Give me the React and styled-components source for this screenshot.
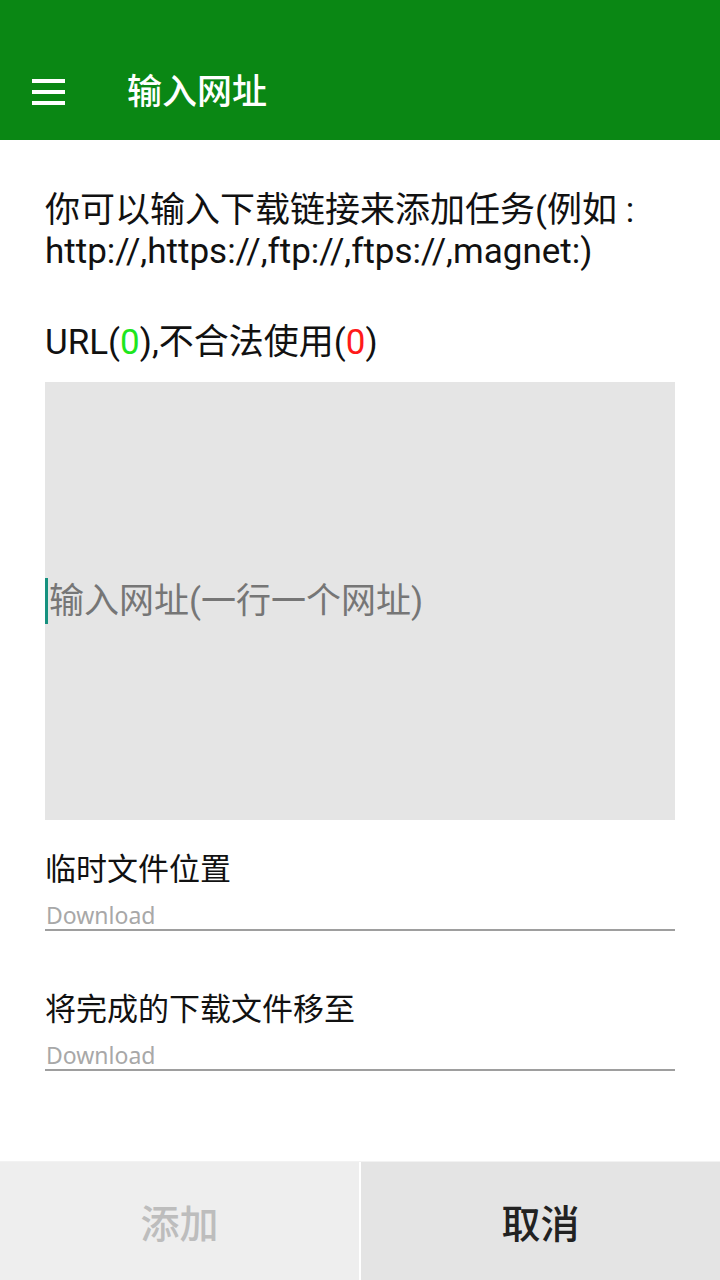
import React from "react";
import styled, { createGlobalStyle } from "styled-components";

const GlobalStyle = createGlobalStyle`
  html, body {
    margin: 0;
    padding: 0;
    background: #ffffff;
  }
  body {
    font-family: Roboto, "Noto Sans CJK SC", sans-serif;
  }
`;

const Page = styled.div`
  display: flex;
  flex-direction: column;
  height: 1280px;
  background: #ffffff;
`;

const AppBar = styled.header`
  height: 140px;
  background: #0a8714;
  display: flex;
  align-items: flex-end;
  flex-shrink: 0;
`;

const BarInner = styled.div`
  height: 96px;
  width: 100%;
  display: flex;
  align-items: center;
  padding-left: 32px;
  box-sizing: border-box;
`;

const MenuButton = styled.div`
  width: 33px;
  display: flex;
  flex-direction: column;
  gap: 7px;

  > span {
    display: block;
    height: 4px;
    background: #ffffff;
  }
`;

const Title = styled.h1`
  margin: 0 0 0 62px;
  color: #ffffff;
  font-size: 35px;
  font-weight: 500;
  line-height: 1;
`;

const Body = styled.main`
  flex: 1;
  padding: 50px 45px 0;
  display: flex;
  flex-direction: column;
`;

const Hint = styled.p`
  margin: 0;
  font-size: 35px;
  line-height: 41px;
  color: #111111;
`;

const Counter = styled.p`
  margin: 50px 0 0;
  font-size: 35px;
  line-height: 41px;
  color: #111111;
`;

const Num = styled.span`
  color: ${p => p.$tone};
`;

const UrlBox = styled.div`
  margin-top: 19px;
  height: 438px;
  background: #e5e5e5;
  display: flex;
  align-items: center;
`;

const Caret = styled.span`
  width: 3px;
  height: 46px;
  background: #16917f;
  flex-shrink: 0;
`;

const Placeholder = styled.span`
  font-size: 35px;
  color: #767676;
  line-height: 1;
  margin-left: 1px;
`;

const Field = styled.div`
  margin-top: ${p => p.$top}px;
  display: flex;
  flex-direction: column;
`;

const FieldLabel = styled.div`
  font-size: 31px;
  line-height: 40px;
  color: #111111;
`;

const FieldValue = styled.div`
  margin-top: 12px;
  padding-left: 1px;
  font-family: "Noto Sans", Roboto, sans-serif;
  font-size: 23px;
  line-height: 26px;
  color: #a8a8a8;
  padding-bottom: 1px;
  border-bottom: 2px solid #9e9e9e;
`;

const Actions = styled.footer`
  height: 118px;
  display: grid;
  grid-template-columns: 359px 1fr;
  gap: 2px;
  background: #ffffff;
  border-top: 1px solid #f2f2f2;
  flex-shrink: 0;
`;

const ActionButton = styled.button`
  border: 0;
  margin: 0;
  font-family: "Noto Sans CJK SC", sans-serif;
  font-size: 39px;
  font-weight: 500;
  background: ${p => (p.disabled ? "#eeeeee" : "#e4e4e4")};
  color: ${p => (p.disabled ? "#bdbdbd" : "#222222")};
`;

export default function App() {
  return (
    <Page>
      <GlobalStyle />
      <AppBar>
        <BarInner>
          <MenuButton>
            <span />
            <span />
            <span />
          </MenuButton>
          <Title>输入网址</Title>
        </BarInner>
      </AppBar>
      <Body>
        <Hint>
          你可以输入下载链接来添加任务(例如 :
          <br />
          http://,https://,ftp://,ftps://,magnet:)
        </Hint>
        <Counter>
          URL(<Num $tone="#1ee61e">0</Num>),不合法使用(<Num $tone="#ff1a1a">0</Num>)
        </Counter>
        <UrlBox>
          <Caret />
          <Placeholder>输入网址(一行一个网址)</Placeholder>
        </UrlBox>
        <Field $top={30}>
          <FieldLabel>临时文件位置</FieldLabel>
          <FieldValue>Download</FieldValue>
        </Field>
        <Field $top={59}>
          <FieldLabel>将完成的下载文件移至</FieldLabel>
          <FieldValue>Download</FieldValue>
        </Field>
      </Body>
      <Actions>
        <ActionButton disabled>添加</ActionButton>
        <ActionButton>取消</ActionButton>
      </Actions>
    </Page>
  );
}
